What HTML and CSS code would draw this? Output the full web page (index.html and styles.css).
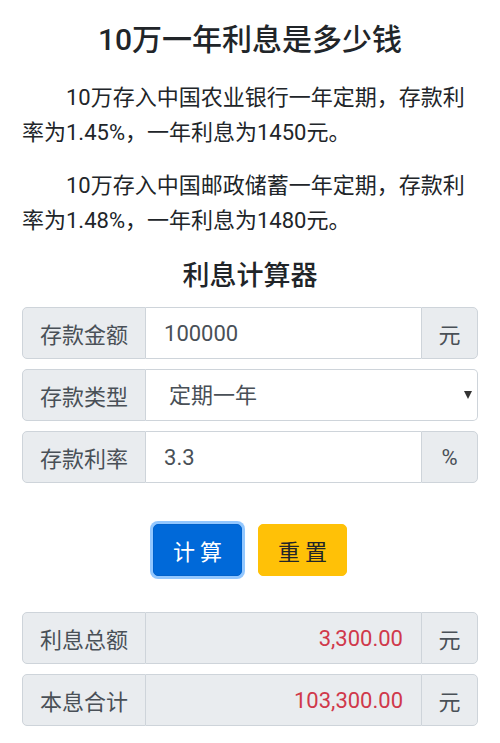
FILE: index.html
```html
<!DOCTYPE html>
<html>
<head>
  <meta charset="utf-8">
  <title>10万一年利息是多少钱</title>
  <link rel="stylesheet" href="styles.css">
</head>
<body>
  <div class="container">
    <h1>10万一年利息是多少钱</h1>
    <p>10万存入中国农业银行一年定期，存款利率为1.45%，一年利息为1450元。</p>
    <p>10万存入中国邮政储蓄一年定期，存款利率为1.48%，一年利息为1480元。</p>

    <h2>利息计算器</h2>
    <div class="input-group">
      <span class="addon">存款金额</span>
      <input type="text" class="field" id="amount" value="100000">
      <span class="addon unit">元</span>
    </div>
    <div class="input-group">
      <span class="addon">存款类型</span>
      <div class="select-wrap">
        <select class="field" id="type">
          <option value="1">定期一年</option>
          <option value="2">定期两年</option>
          <option value="3">定期三年</option>
        </select>
        <span class="caret"></span>
      </div>
    </div>
    <div class="input-group">
      <span class="addon">存款利率</span>
      <input type="text" class="field" id="rate" value="3.3">
      <span class="addon unit">%</span>
    </div>

    <div class="buttons">
      <button class="btn btn-primary" onclick="calculate()">计算</button>
      <button class="btn btn-warning" onclick="resetForm()">重置</button>
    </div>

    <div class="input-group">
      <span class="addon">利息总额</span>
      <input type="text" class="field result" id="interest" value="3,300.00" readonly>
      <span class="addon unit">元</span>
    </div>
    <div class="input-group">
      <span class="addon">本息合计</span>
      <input type="text" class="field result" id="total" value="103,300.00" readonly>
      <span class="addon unit">元</span>
    </div>
  </div>

  <script>
    function money(num) {
      return num.toLocaleString('en-US', { minimumFractionDigits: 2, maximumFractionDigits: 2 });
    }

    function calculate() {
      const amount = parseFloat(document.getElementById('amount').value) || 0;
      const rate = parseFloat(document.getElementById('rate').value) || 0;
      const years = parseInt(document.getElementById('type').value) || 1;
      const interest = amount * rate / 100 * years;
      document.getElementById('interest').value = money(interest);
      document.getElementById('total').value = money(amount + interest);
    }

    function resetForm() {
      document.getElementById('amount').value = '';
      document.getElementById('rate').value = '';
      document.getElementById('type').value = '1';
      document.getElementById('interest').value = '';
      document.getElementById('total').value = '';
    }
  </script>
</body>
</html>
```

FILE: styles.css
```css
body {
  margin: 0;
  font-family: Roboto, "Noto Sans CJK SC", sans-serif;
  color: #212529;
  background: #fff;
}

.container {
  padding: 0 22px;
}

h1 {
  font-size: 30px;
  font-weight: 500;
  line-height: 36px;
  text-align: center;
  margin: 22px 0 22px;
}

p {
  font-size: 22px;
  line-height: 35px;
  text-indent: 2em;
  margin: 0 0 18px;
}

h2 {
  font-size: 27px;
  font-weight: 500;
  line-height: 32px;
  text-align: center;
  margin: 22px 0 15px;
}

.input-group {
  display: flex;
  height: 52px;
  margin-bottom: 10px;
  font-size: 22px;
}

.addon {
  display: flex;
  align-items: center;
  padding: 0 17px;
  background-color: #e9ecef;
  border: 1px solid #ced4da;
  color: #495057;
  border-radius: 5px 0 0 5px;
}

.addon.unit {
  border-radius: 0 5px 5px 0;
  padding: 0 16px;
  width: 23px;
  justify-content: center;
}

.field {
  flex: 1;
  min-width: 0;
  font: inherit;
  color: #495057;
  padding: 0 18px;
  border: 1px solid #ced4da;
  border-left: none;
  border-right: none;
  background: #fff;
  outline: none;
}

.select-wrap {
  flex: 1;
  display: flex;
  position: relative;
}

.select-wrap select {
  appearance: none;
  -webkit-appearance: none;
  border-right: 1px solid #ced4da;
  border-radius: 0 5px 5px 0;
  padding-left: 23px;
}

.caret {
  position: absolute;
  right: 6px;
  top: 22px;
  border-left: 4px solid transparent;
  border-right: 4px solid transparent;
  border-top: 8px solid #333;
}

.result {
  background-color: #e9ecef;
  color: #d0394b;
  text-align: right;
}

.buttons {
  display: flex;
  justify-content: center;
  gap: 16px;
  margin: 41px 0 36px;
}

.btn {
  height: 52px;
  padding: 0 14px 0 19px;
  font: inherit;
  font-size: 22px;
  letter-spacing: 5px;
  border-radius: 5px;
  cursor: pointer;
}

.btn-primary {
  background-color: #0069d9;
  border: 1px solid #0062cc;
  color: #fff;
  box-shadow: 0 0 0 3px rgba(38, 143, 255, 0.5);
}

.btn-warning {
  background-color: #ffc107;
  border: 1px solid #ffc107;
  color: #212529;
}
```
